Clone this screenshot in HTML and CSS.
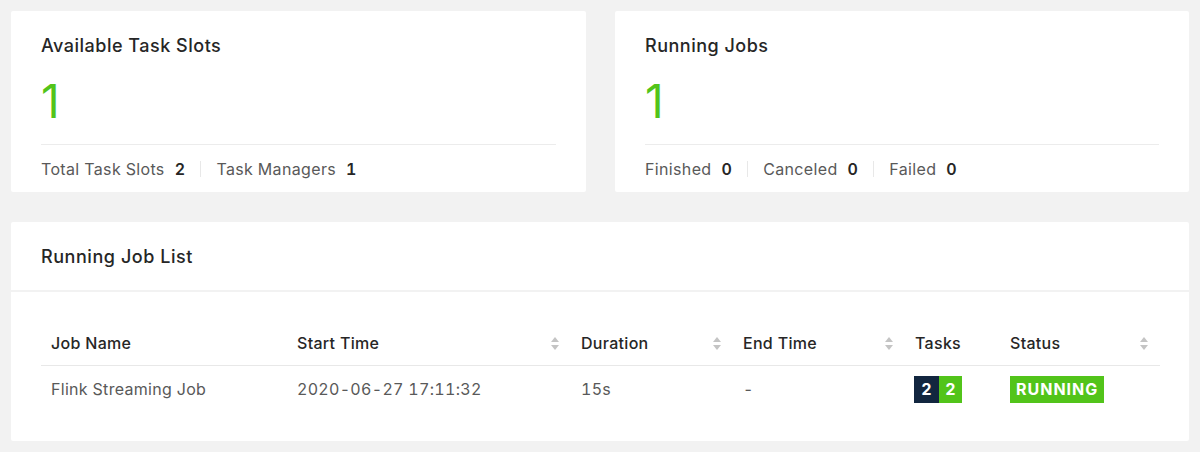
FILE: index.html
```html
<!DOCTYPE html>
<html>
<head>
<meta charset="utf-8">
<link rel="stylesheet" href="styles.css">
</head>
<body>
<div class="page">
  <div class="top-row">
    <div class="card stat-card">
      <div class="card-title">Available Task Slots</div>
      <div class="big-number">1</div>
      <div class="stat-footer">
        <span class="label">Total Task Slots</span><span class="value">2</span>
        <span class="sep"></span>
        <span class="label">Task Managers</span><span class="value">1</span>
      </div>
    </div>
    <div class="card stat-card">
      <div class="card-title">Running Jobs</div>
      <div class="big-number">1</div>
      <div class="stat-footer">
        <span class="label">Finished</span><span class="value">0</span>
        <span class="sep"></span>
        <span class="label">Canceled</span><span class="value">0</span>
        <span class="sep"></span>
        <span class="label">Failed</span><span class="value">0</span>
      </div>
    </div>
  </div>
  <div class="card list-card">
    <div class="list-head">Running Job List</div>
    <div class="list-body">
      <table class="jobs">
        <colgroup>
          <col class="c1"><col class="c2"><col class="c3"><col class="c4"><col class="c5"><col class="c6">
        </colgroup>
        <thead>
          <tr>
            <th>Job Name</th>
            <th><div class="th-in"><span>Start Time</span><span class="sorter"><i class="up"></i><i class="down"></i></span></div></th>
            <th><div class="th-in"><span>Duration</span><span class="sorter"><i class="up"></i><i class="down"></i></span></div></th>
            <th><div class="th-in"><span>End Time</span><span class="sorter"><i class="up"></i><i class="down"></i></span></div></th>
            <th>Tasks</th>
            <th><div class="th-in"><span>Status</span><span class="sorter"><i class="up"></i><i class="down"></i></span></div></th>
          </tr>
        </thead>
        <tbody>
          <tr>
            <td>Flink Streaming Job</td>
            <td>2020-06-27 17:11:32</td>
            <td>15s</td>
            <td>-</td>
            <td><span class="tasks"><span class="t-dark">2</span><span class="t-green">2</span></span></td>
            <td><span class="tag-running">RUNNING</span></td>
          </tr>
        </tbody>
      </table>
    </div>
  </div>
</div>
</body>
</html>
```

FILE: styles.css
```css
* { box-sizing: border-box; }
html, body { margin: 0; padding: 0; }
body {
  background: #f2f2f2;
  font-family: Inter, "Noto Sans", "Liberation Sans", sans-serif;
  color: rgba(0,0,0,0.65);
  letter-spacing: 0.35px;
  font-variant-numeric: tabular-nums;
}
.page {
  padding: 11px 11px 0 11px;
  display: flex;
  flex-direction: column;
  gap: 30px;
}
.top-row {
  display: grid;
  grid-template-columns: 575px 574px;
  column-gap: 29px;
}
.card {
  background: #fff;
  border-radius: 2px;
}
.stat-card {
  padding: 23px 30px 0 30px;
  height: 181px;
}
.card-title {
  font-size: 18px;
  line-height: 24px;
  color: #262626;
  font-weight: 500;
  letter-spacing: 0.5px;
}
.big-number {
  margin-top: 15px;
  font-size: 46px;
  line-height: 56px;
  color: #52c41a;
  font-weight: 400;
  font-variant-numeric: normal;
}
.stat-footer {
  margin-top: 15px;
  border-top: 1px solid #ececec;
  height: 48px;
  display: flex;
  align-items: center;
  font-size: 16px;
  line-height: 22px;
}
.stat-footer .label { color: #595959; }
.stat-footer .value {
  margin-left: 10px;
  color: #262626;
  font-weight: 600;
}
.stat-footer .sep {
  width: 1px;
  height: 16px;
  background: #e8e8e8;
  margin: 0 15px;
}
.list-card {
  height: 219px;
}
.list-head {
  height: 70px;
  padding: 0 30px;
  display: flex;
  align-items: center;
  font-size: 18px;
  color: #262626;
  font-weight: 500;
  letter-spacing: 0.55px;
  border-bottom: 2px solid #f2f2f2;
}
.list-body {
  padding: 30px 30px 0 30px;
}
.jobs {
  width: 100%;
  border-collapse: collapse;
  table-layout: fixed;
  font-size: 16px;
}
.c1 { width: 246px; }
.c2 { width: 284px; }
.c3 { width: 162px; }
.c4 { width: 172px; }
.c5 { width: 95px; }
.c6 { width: 160px; }
.jobs th {
  text-align: left;
  font-weight: 500;
  color: #262626;
  padding: 10px 10px 11px 10px;
  line-height: 22px;
  border-bottom: 1px solid #e8e8e8;
  letter-spacing: 0.3px;
}
.th-in {
  display: flex;
  align-items: center;
  justify-content: space-between;
}
.sorter {
  display: flex;
  flex-direction: column;
  gap: 3px;
  margin-right: 2px;
}
.sorter i {
  display: block;
  width: 0;
  height: 0;
  border-left: 4px solid transparent;
  border-right: 4px solid transparent;
}
.sorter .up { border-bottom: 5px solid #c4c4c4; }
.sorter .down { border-top: 5px solid #c4c4c4; }
.jobs td {
  padding: 10px 10px;
  line-height: 27px;
  color: #595959;
  white-space: nowrap;
  letter-spacing: 0.3px;
}
.tasks {
  display: inline-flex;
  vertical-align: top;
  margin-left: -1px;
}
.t-dark, .t-green, .tag-running {
  display: inline-block;
  height: 27px;
  line-height: 27px;
  color: #fff;
  font-weight: 700;
  font-size: 16px;
}
.t-dark { background: #12263f; width: 25px; text-align: center; }
.t-green { background: #52c41a; width: 23px; text-align: center; }
.tag-running {
  background: #52c41a;
  padding: 0 6px;
  vertical-align: top;
  letter-spacing: 1px;
}
```
